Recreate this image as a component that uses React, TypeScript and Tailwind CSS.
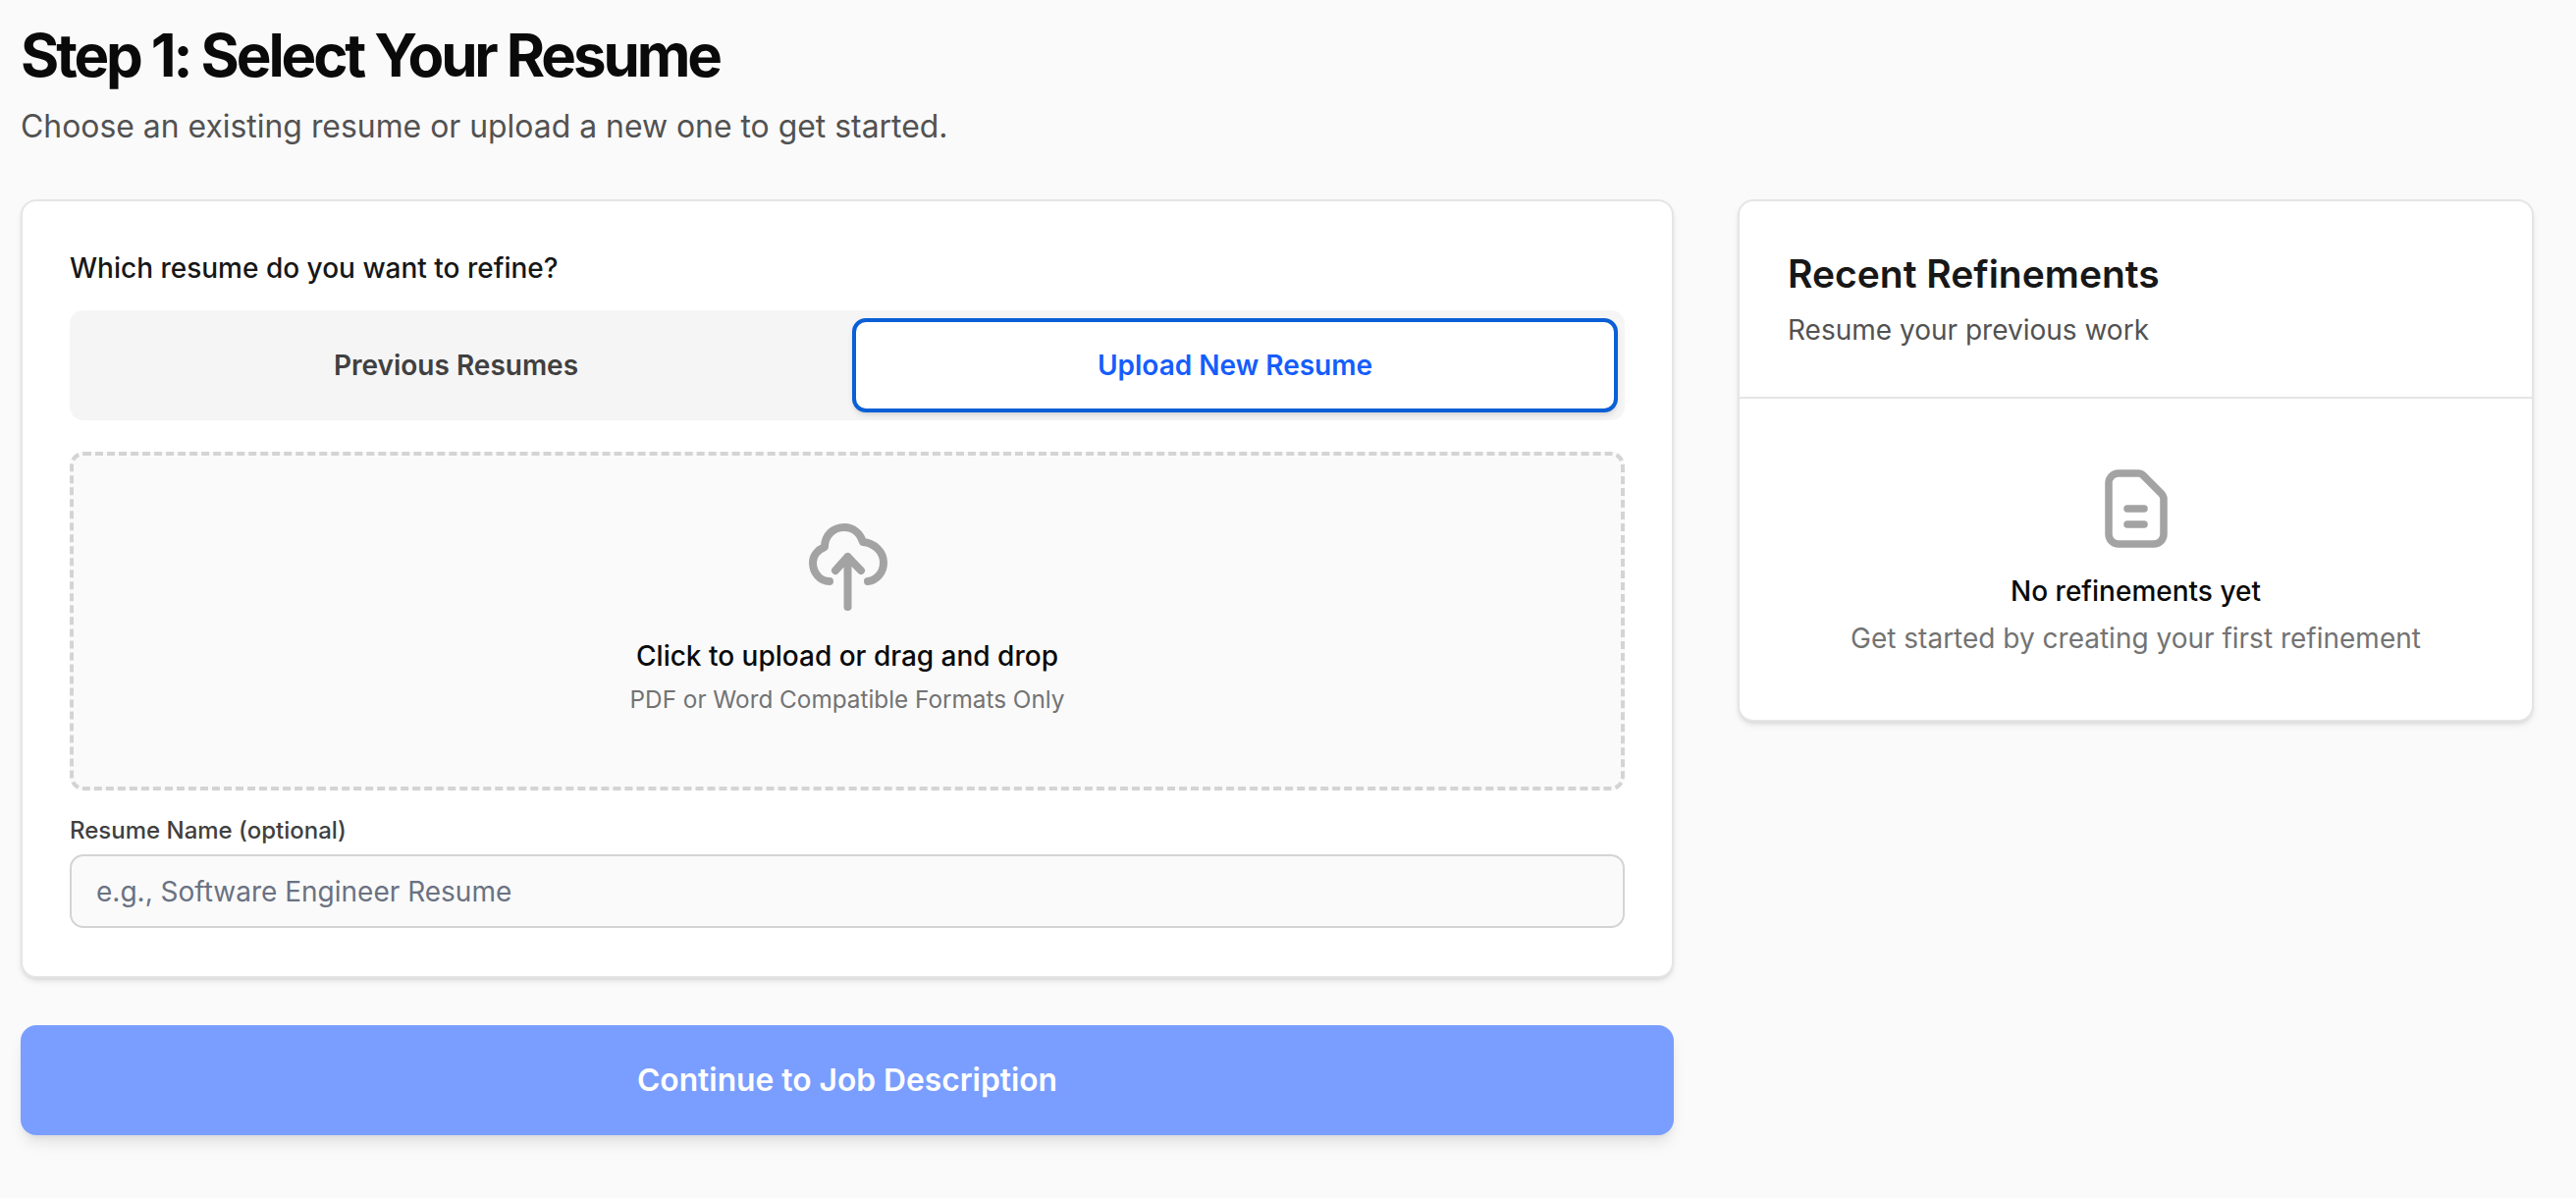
const font = "font-['Inter',sans-serif]";

const CloudIcon = () => (
  <svg viewBox="15 20 96 96" className="h-[96px] w-[96px]" fill="none" stroke="#a3a3a3" strokeWidth="8" strokeLinecap="round" strokeLinejoin="round">
    <path d="M45 82C35 82 28 73 28 63C28 56 33 50 40 47C40 35 49 27 60 27C69 27 76 33 79 42C91 43 100 52 100 63C100 73 93 81 84 82" />
    <path d="M63.500 108V57M51 71L63.500 57L77 71" />
  </svg>
);

const DocIcon = () => (
  <svg viewBox="0 0 64 80" className="h-[80px] w-[64px]" fill="none" stroke="#a3a3a3" strokeWidth="7.5" strokeLinecap="round" strokeLinejoin="round">
    <path d="M14 4h20q3 0 5 2L57 24q3 3 3 6V66a10 10 0 0 1-10 10H14a10 10 0 0 1-10-10V14a10 10 0 0 1 10-10z" />
    <path d="M23 40h17M23 56h17" />
  </svg>
);

export default function App() {
  return (
    <div className={`${font} min-h-[1220px] bg-[#fafafa] pl-[21px] pr-[43px] pt-[24px]`}>
      <h1 className="text-[60px] font-bold leading-[64px] tracking-[-0.052em] text-[#0a0a0a]">Step 1: Select Your Resume</h1>
      <p className="mt-[19px] text-[31.9px] leading-[44px] text-[#525252]">Choose an existing resume or upload a new one to get started.</p>

      <div className="mt-[52px] flex items-start gap-[65px]">
        <div className="flex-1">
          <div className="rounded-[16px] border-2 border-[#e5e5e5] bg-white px-[48px] pt-[50px] pb-[49px] shadow-md">
            <p className="text-[28px] font-medium leading-[36px] text-[#171717]">Which resume do you want to refine?</p>
            <div className="mt-[25px] grid h-[112px] grid-cols-[787px_780px] gap-[10px] rounded-[14px] bg-[#f5f5f5] py-[8px]">
              <div className="flex items-center justify-center text-[28px] font-semibold text-[#404040]">Previous Resumes</div>
              <div className="flex items-center justify-center rounded-[14px] border-[4px] border-[#0a5fd6] bg-white text-[28px] font-semibold text-[#155dfc] shadow-md">Upload New Resume</div>
            </div>
            <div className="mt-[32px] flex h-[345px] flex-col items-center rounded-[14px] border-[4px] border-dashed border-[#d4d4d4] bg-[#fafafa] pt-[66px]">
              <CloudIcon />
              <p className="mt-[24px] text-[28px] font-medium leading-[36px] text-[#0a0a0a]">Click to upload or drag and drop</p>
              <p className="mt-[10px] text-[24.3px] leading-[32px] text-[#737373]">PDF or Word Compatible Formats Only</p>
            </div>
            <label className="mt-[25px] block text-[24px] font-medium leading-[32px] text-[#404040]">Resume Name (optional)</label>
            <div className="mt-[8px] flex h-[75px] items-center rounded-[14px] border-2 border-[#d4d4d4] bg-[#fafafa] px-[25px] text-[28px] text-[#6a7282]">e.g., Software Engineer Resume</div>
          </div>
          <button className="mt-[48px] flex h-[112px] w-full items-center justify-center rounded-[16px] bg-[#7a9eff] text-[31.75px] font-semibold text-white shadow-lg">Continue to Job Description</button>
        </div>

        <div className="w-[811px] rounded-[16px] border-2 border-[#e5e5e5] bg-white shadow-md">
          <div className="border-b-2 border-[#e5e5e5] px-[49px] pt-[50px] pb-[50px]">
            <h2 className="text-[39px] font-semibold leading-[48px] text-[#171717]">Recent Refinements</h2>
            <p className="mt-[15px] text-[28px] leading-[36px] text-[#525252]">Resume your previous work</p>
          </div>
          <div className="flex flex-col items-center px-[48px] pt-[72px] pb-[65px]">
            <DocIcon />
            <p className="mt-[26px] text-[28px] font-medium leading-[36px] text-[#0a0a0a]">No refinements yet</p>
            <p className="mt-[12px] text-[28px] leading-[36px] text-[#737373]">Get started by creating your first refinement</p>
          </div>
        </div>
      </div>
    </div>
  );
}
